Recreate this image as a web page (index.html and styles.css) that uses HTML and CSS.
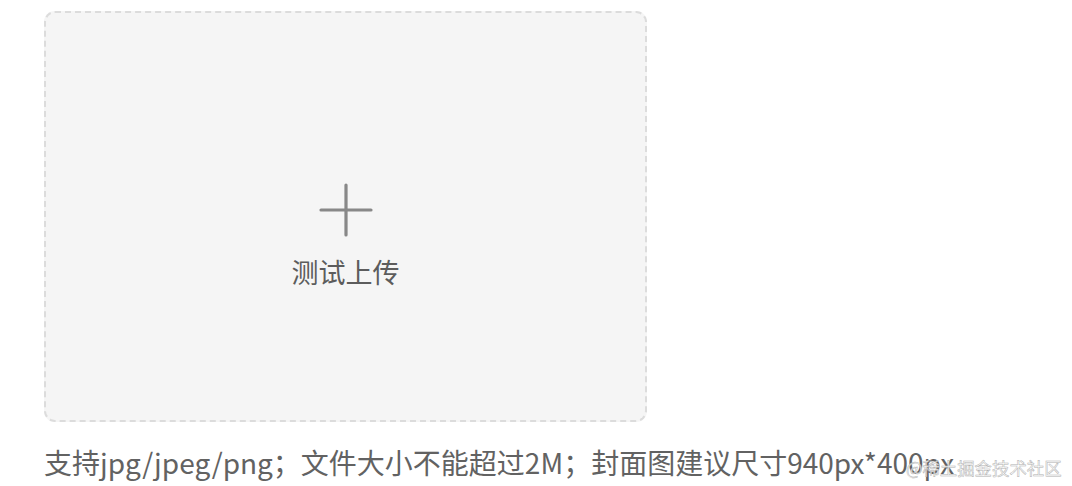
FILE: index.html
```html
<!DOCTYPE html>
<html lang="zh">
<head>
<meta charset="utf-8">
<link rel="stylesheet" href="styles.css">
</head>
<body>
<div class="page">
  <div class="uploader">
    <svg class="plus" width="54" height="54" viewBox="0 0 54 54">
      <path d="M27 2 V52 M2 27 H52" stroke="#888" stroke-width="3.2" stroke-linecap="round" fill="none"/>
    </svg>
    <div class="label">测试上传</div>
  </div>
  <div class="hint">支持jpg/jpeg/png；文件大小不能超过2M；封面图建议尺寸940px*400px</div>
</div>
<div class="watermark">@稀土掘金技术社区</div>
</body>
</html>
```
FILE: styles.css
```css
html, body {
  margin: 0;
  padding: 0;
  background: #fff;
  font-family: "Noto Sans CJK SC", "Noto Sans", sans-serif;
}
.page {
  padding: 11px 0 0 44px;
}
.uploader {
  box-sizing: border-box;
  width: 603px;
  height: 411px;
  border: 2px dashed #dcdcdc;
  border-radius: 11px;
  background: #f5f5f5;
  display: flex;
  flex-direction: column;
  align-items: center;
  justify-content: center;
  padding-top: 40px;
}
.plus {
  display: block;
}
.label {
  margin-top: 16px;
  font-size: 27px;
  line-height: 38px;
  color: #5c5c5c;
}
.hint {
  margin-top: 20px;
  font-size: 28px;
  line-height: 40px;
  color: #626262;
}
.watermark {
  position: absolute;
  left: 906px;
  top: 455px;
  white-space: nowrap;
  font-size: 17.4px;
  line-height: 26px;
  color: rgba(255,255,255,0.85);
  -webkit-text-stroke: 0.5px #b0b0b0;
  font-family: "Noto Sans CJK SC", sans-serif;
}
```
